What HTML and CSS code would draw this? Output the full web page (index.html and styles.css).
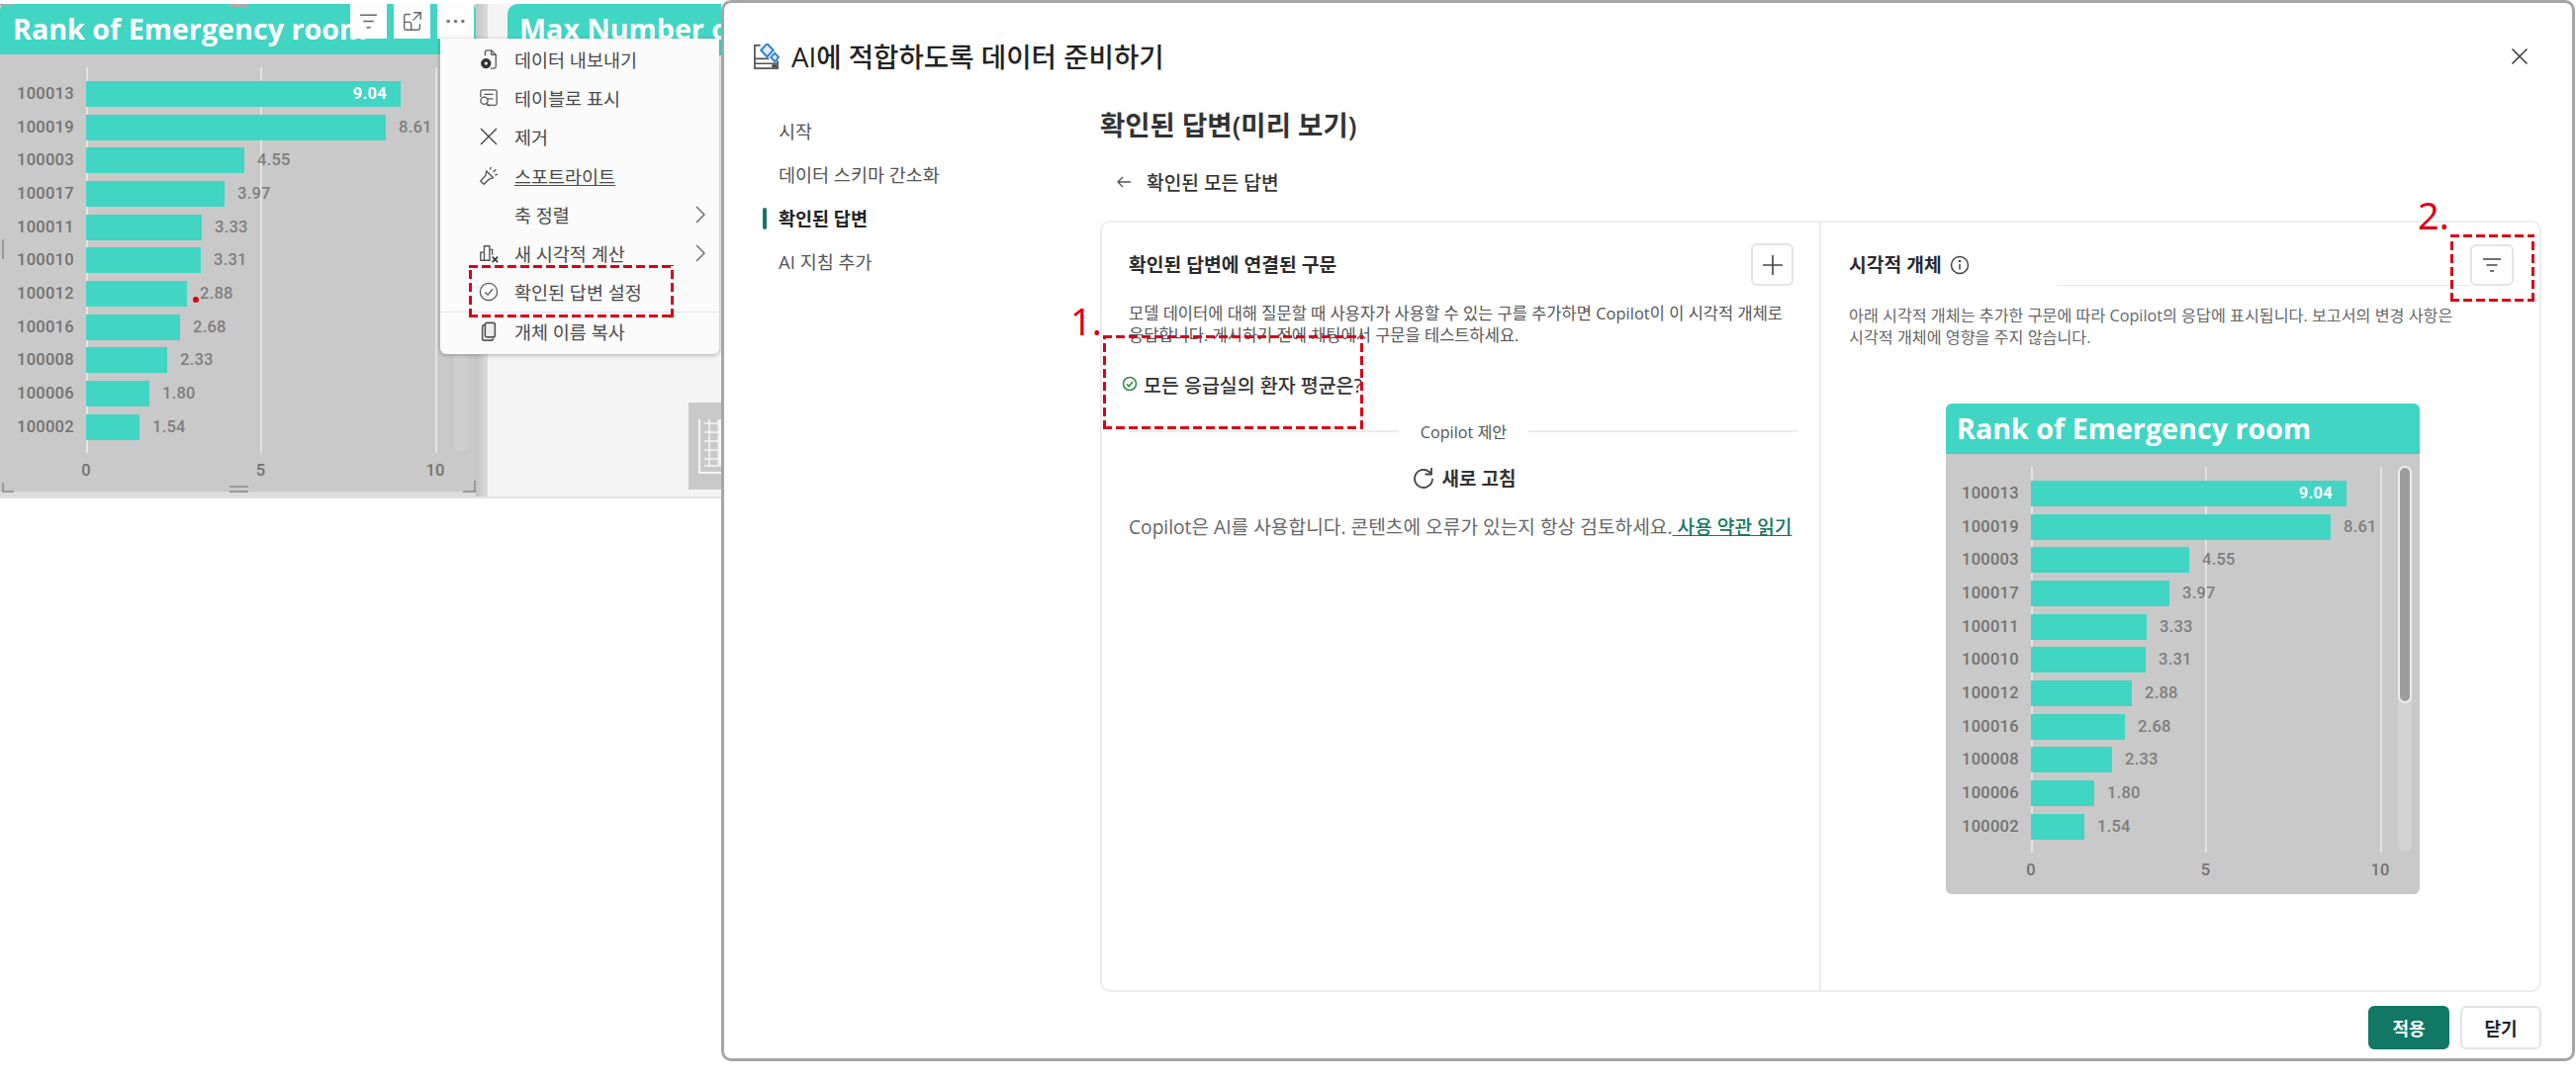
FILE: index.html
```html
<!DOCTYPE html>
<html lang="ko">
<head>
<meta charset="utf-8">
<title>AI에 적합하도록 데이터 준비하기</title>
<link rel="stylesheet" href="styles.css">
</head>
<body>
<div class="page">
  <section class="report">
    <div class="chart chart-left">
      <div class="chart-title">Rank of Emergency room</div>
      <div class="chart-body">
        <div class="plot">
          <div class="row"><span class="cat">100013</span><span class="bar" style="width:318px"><b class="inside">9.04</b></span></div>
          <div class="row"><span class="cat">100019</span><span class="bar" style="width:303px"></span><span class="val">8.61</span></div>
          <div class="row"><span class="cat">100003</span><span class="bar" style="width:160px"></span><span class="val">4.55</span></div>
          <div class="row"><span class="cat">100017</span><span class="bar" style="width:140px"></span><span class="val">3.97</span></div>
          <div class="row"><span class="cat">100011</span><span class="bar" style="width:117px"></span><span class="val">3.33</span></div>
          <div class="row"><span class="cat">100010</span><span class="bar" style="width:116px"></span><span class="val">3.31</span></div>
          <div class="row"><span class="cat">100012</span><span class="bar" style="width:102px"></span><span class="val">2.88</span></div>
          <div class="row"><span class="cat">100016</span><span class="bar" style="width:95px"></span><span class="val">2.68</span></div>
          <div class="row"><span class="cat">100008</span><span class="bar" style="width:82px"></span><span class="val">2.33</span></div>
          <div class="row"><span class="cat">100006</span><span class="bar" style="width:64px"></span><span class="val">1.80</span></div>
          <div class="row"><span class="cat">100002</span><span class="bar" style="width:54px"></span><span class="val">1.54</span></div>
        </div>
        <div class="axis"><span>0</span><span>5</span><span>10</span></div>
        <div class="scroll scroll-faint"></div>
        <i class="red-dot"></i>
      </div>
      <i class="grip grip-tl"></i><i class="grip grip-tm"></i><i class="grip grip-ml"></i>
      <i class="grip grip-bl"></i><i class="grip grip-bm"></i><i class="grip grip-br"></i>
    </div>
    <div class="shade"></div>
    <div class="second">
      <div class="second-title">Max Number of</div>
      <div class="tile">
        <svg class="tile-icon" viewBox="0 0 41 55" fill="none" stroke="#f4f4f4" stroke-width="1.600"><path d="M1 0v54h40" stroke-width="2"/><path d="M6 4h35M6 13h35M6 22h35M6 31h35M6 40h35M6 47h35M11 0v48M33 0v48"/><path d="M23 0v46" stroke-width="7"/></svg>
      </div>
    </div>

    <div class="toolbar">
      <span class="tool"><svg viewBox="0 0 20 20" fill="none" stroke="#666" stroke-width="1.400"><path d="M2 4h16M5 10h10M8 16h4"/></svg></span>
      <span class="tool"><svg viewBox="0 0 24 24" fill="none" stroke="#666" stroke-width="1.600"><path d="M10 4H5a2 2 0 0 0-2 2v14a2 2 0 0 0 2 2h14a2 2 0 0 0 2-2v-5M3 13h6a2 2 0 0 1 2 2v7M14 2h8v8M22 2l-9 9"/></svg></span>
      <span class="tool"><svg viewBox="0 0 20 20" fill="#777"><circle cx="3" cy="10" r="1.700"/><circle cx="10" cy="10" r="1.700"/><circle cx="17" cy="10" r="1.700"/></svg></span>
    </div>

    <ul class="menu">
      <li class="menu-item"><svg class="menu-icon" viewBox="0 0 20 22" fill="none" stroke="#555" stroke-width="1.400"><path d="M6 7V3a2 2 0 0 1 2-2h5l5 5v13a2 2 0 0 1-2 2h-4"/><path d="M13 1v5h5"/><circle cx="7" cy="15.500" r="5" fill="#333" stroke="#333"/><circle cx="7" cy="15.500" r="1.800" fill="#fff" stroke="none"/></svg><span>데이터 내보내기</span></li>
      <li class="menu-item"><svg class="menu-icon" viewBox="0 0 22 22" fill="none" stroke="#555" stroke-width="1.400"><path d="M9 19h9a2 2 0 0 0 2-2V4a2 2 0 0 0-2-2H4a2 2 0 0 0-2 2v6"/><path d="M6 7h10M16 12H9"/><circle cx="6" cy="14" r="4"/><path d="M9 17l3 3"/></svg><span>테이블로 표시</span></li>
      <li class="menu-item"><svg class="menu-icon" viewBox="0 0 20 20" fill="none" stroke="#444" stroke-width="1.400"><path d="M2 2l16 16M18 2 2 18"/></svg><span>제거</span></li>
      <li class="menu-item"><svg class="menu-icon" viewBox="0 0 22 22" fill="none" stroke="#555" stroke-width="1.500"><path d="M2 16.500 5.500 20l6-5.500 4.500-1.500L8.500 5.500l-1 5z"/><path d="M12.500 4l1-3M16 6.500l3-3M18 10l3-1"/></svg><span class="under">스포트라이트</span></li>
      <li class="menu-item"><span class="menu-blank"></span><span class="grow">축 정렬</span><svg class="chev" viewBox="0 0 12 20" fill="none" stroke="#666" stroke-width="1.400"><path d="M2 2l8 8-8 8"/></svg></li>
      <li class="menu-item"><svg class="menu-icon" viewBox="0 0 22 22" fill="none" stroke="#555" stroke-width="1.500"><path d="M2 19V10h4v9zM6 19V3h6v16M6 19h7M12 7h3v6"/><path d="M15 15l6 6M21 15l-6 6" stroke="#333" stroke-width="1.800"/></svg><span class="grow">새 시각적 계산</span><svg class="chev" viewBox="0 0 12 20" fill="none" stroke="#666" stroke-width="1.400"><path d="M2 2l8 8-8 8"/></svg></li>
      <li class="menu-item"><svg class="menu-icon" viewBox="0 0 22 22" fill="none" stroke="#555" stroke-width="1.400"><circle cx="11" cy="11" r="9.500"/><path d="M7 11.500l3 3 5.500-6.500"/></svg><span>확인된 답변 설정</span></li>
      <li class="menu-item menu-sep"><svg class="menu-icon" viewBox="0 0 20 22" fill="none" stroke="#555" stroke-width="1.800"><rect x="6" y="1.500" width="11" height="16" rx="2" fill="#eee"/><path d="M6 4H5a2 2 0 0 0-2 2v13a2 2 0 0 0 2 2h8a2 2 0 0 0 2-2"/></svg><span>개체 이름 복사</span></li>
    </ul>
  </section>

  <section class="dialog">
    <header class="dlg-head">
      <svg class="dlg-icon" viewBox="0 0 28 28" fill="none"><path d="M8 2H2v24h24v-8" stroke="#555" stroke-width="1.800"/><path d="M2 16h15M2 21h24" stroke="#555" stroke-width="1.800"/><path d="M20 22h5v3h-5z" fill="#444"/><path d="M15 0l6.500 7L15 14 8.500 7z" fill="#dcecfa" stroke="#2f7fd0" stroke-width="2"/><path d="M23 10l4 4.500-4 4.500-4-4.500z" fill="#dcecfa" stroke="#2f7fd0" stroke-width="2"/></svg>
      <h1 class="dlg-title">AI에 적합하도록 데이터 준비하기</h1>
      <svg class="dlg-close" viewBox="0 0 18 18" fill="none" stroke="#444" stroke-width="1.600"><path d="M1.500 1.500l15 15M16.500 1.500l-15 15"/></svg>
    </header>
    <div class="dlg-body">
      <nav class="nav">
        <a class="nav-item">시작</a>
        <a class="nav-item">데이터 스키마 간소화</a>
        <a class="nav-item nav-active">확인된 답변</a>
        <a class="nav-item">AI 지침 추가</a>
      </nav>
      <main class="main">
        <h2 class="main-title">확인된 답변(미리 보기)</h2>
        <div class="back">
          <svg class="back-icon" viewBox="0 0 16 14" fill="none" stroke="#555" stroke-width="1.300"><path d="M15 7H2M7 2 2 7l5 5"/></svg>
          <span>확인된 모든 답변</span>
        </div>
        <div class="card">
          <div class="pane pane-left">
            <div class="pane-head pane-head-left">
              <h3 class="pane-title">확인된 답변에 연결된 구문</h3>
              <span class="sq-btn sq-plus"><svg viewBox="0 0 22 22" fill="none" stroke="#444" stroke-width="1.600"><path d="M11 1v20M1 11h20"/></svg></span>
            </div>
            <p class="desc">모델 데이터에 대해 질문할 때 사용자가 사용할 수 있는 구를 추가하면 Copilot이 이 시각적 개체로 응답합니다. 게시하기 전에 채팅에서 구문을 테스트하세요.</p>
            <div class="question">
              <svg class="q-icon" viewBox="0 0 16 16" fill="none" stroke="#2f8a4a" stroke-width="1.600"><circle cx="8" cy="8" r="6.500"/><path d="M5 8.300l2.200 2.200L11 6"/></svg>
              <span>모든 응급실의 환자 평균은?</span>
            </div>
            <div class="divider"><span>Copilot 제안</span></div>
            <div class="refresh">
              <svg class="refresh-icon" viewBox="0 0 24 24" fill="none" stroke="#444" stroke-width="1.800"><path d="M19.500 8A9 9 0 1 0 21 13"/><path d="M20 2v6.500h-6.500"/></svg>
              <span>새로 고침</span>
            </div>
            <p class="terms">Copilot은 AI를 사용합니다. 콘텐츠에 오류가 있는지 항상 검토하세요.<a class="terms-link"> 사용 약관 읽기</a></p>
          </div>
          <div class="pane pane-right">
            <div class="pane-head">
              <h3 class="pane-title">시각적 개체</h3>
              <svg class="info" viewBox="0 0 20 20" fill="none" stroke="#444" stroke-width="1.500"><circle cx="10" cy="10" r="8.500"/><path d="M10 9v5.500"/><circle cx="10" cy="6" r=".6"/></svg>
              <span class="rule"></span>
              <span class="sq-btn sq-filter"><svg viewBox="0 0 20 20" fill="none" stroke="#444" stroke-width="1.600"><path d="M1 4h18M4.500 10h11M8 16h4"/></svg></span>
            </div>
            <p class="desc desc-right">아래 시각적 개체는 추가한 구문에 따라 Copilot의 응답에 표시됩니다. 보고서의 변경 사항은 시각적 개체에 영향을 주지 않습니다.</p>
            <div class="chart chart-right">
              <div class="chart-title">Rank of Emergency room</div>
              <div class="chart-body">
                <div class="plot">
                  <div class="row"><span class="cat">100013</span><span class="bar" style="width:319px"><b class="inside">9.04</b></span></div>
                  <div class="row"><span class="cat">100019</span><span class="bar" style="width:303px"></span><span class="val">8.61</span></div>
                  <div class="row"><span class="cat">100003</span><span class="bar" style="width:160px"></span><span class="val">4.55</span></div>
                  <div class="row"><span class="cat">100017</span><span class="bar" style="width:140px"></span><span class="val">3.97</span></div>
                  <div class="row"><span class="cat">100011</span><span class="bar" style="width:117px"></span><span class="val">3.33</span></div>
                  <div class="row"><span class="cat">100010</span><span class="bar" style="width:116px"></span><span class="val">3.31</span></div>
                  <div class="row"><span class="cat">100012</span><span class="bar" style="width:102px"></span><span class="val">2.88</span></div>
                  <div class="row"><span class="cat">100016</span><span class="bar" style="width:95px"></span><span class="val">2.68</span></div>
                  <div class="row"><span class="cat">100008</span><span class="bar" style="width:82px"></span><span class="val">2.33</span></div>
                  <div class="row"><span class="cat">100006</span><span class="bar" style="width:64px"></span><span class="val">1.80</span></div>
                  <div class="row"><span class="cat">100002</span><span class="bar" style="width:54px"></span><span class="val">1.54</span></div>
                </div>
                <div class="axis"><span>0</span><span>5</span><span>10</span></div>
                <div class="scroll"><i class="thumb"></i></div>
              </div>
            </div>
          </div>
        </div>
        <footer class="dlg-foot">
          <button class="btn btn-primary">적용</button>
          <button class="btn">닫기</button>
        </footer>
      </main>
    </div>
  </section>

  <i class="mark mark-menu"></i>
  <i class="mark mark-question"></i>
  <i class="mark mark-filter"></i>
  <span class="note note-1">1.</span>
  <span class="note note-2">2.</span>
</div>
</body>
</html>
```

FILE: styles.css
```css
* { box-sizing: border-box; }
html, body { margin: 0; padding: 0; background: #fff; }
body { font-family: "Open Sans", "Noto Sans CJK KR", sans-serif; color: #222; }
h1, h2, h3, p, ul { margin: 0; padding: 0; }
i { display: block; }

.page { position: relative; width: 2604px; height: 1096px; display: flex; align-items: flex-start; overflow: hidden; }

/* left report screenshot */
.report { position: relative; flex: 0 0 729px; height: 504px; padding-top: 4px; display: flex; align-items: flex-start; background: linear-gradient(#fff 4px, #f4f4f4 4px); border-bottom: 2px solid #e2e2e2; overflow: hidden; }
.shade { flex: 0 0 12px; height: 498px; background: linear-gradient(90deg, #c4c4c4, #dcdcdc); }

.chart { position: relative; flex: none; }
.chart-left { width: 481px; padding-bottom: 6px; background: #dcdcdc; }
.chart-right { width: 479px; margin: 56px 0 0 98px; }
.chart-title { height: 51px; padding-left: 11px; background: #41d5c4; color: #fff; font: 700 28.700px/50px "Open Sans", sans-serif; white-space: nowrap; overflow: hidden; border-radius: 6px 6px 0 0; }
.chart-left .chart-title { padding-left: 13px; }
.chart-body { position: relative; height: 442px; padding: 13px 0 0 17px; background: #c9c9c9; }
.chart-right .chart-body { height: 445px; padding-left: 16px; border-radius: 0 0 6px 6px; }
.plot { width: 425px; height: 390px; padding-top: 14px; display: flex; flex-direction: column; gap: 7.670px; background-image: linear-gradient(#e4e4e4, #e4e4e4), linear-gradient(#e4e4e4, #e4e4e4), linear-gradient(#e4e4e4, #e4e4e4); background-size: 2px 100%; background-repeat: no-repeat; background-position: 70px 0, 246px 0, 423px 0; }
.row { display: flex; align-items: center; height: 26px; font: 500 16.500px/26px Roboto, sans-serif; letter-spacing: .25px; color: #727272; }
.cat { flex: 0 0 70px; }
.bar { display: flex; justify-content: flex-end; height: 26px; background: #41d5c4; }
.inside { padding-right: 14px; color: #fff; font-weight: 700; }
.val { margin-left: 13px; color: #7e7e7e; }
.axis { display: flex; justify-content: space-between; width: 393px; margin: 8px 0 0 50px; font: 500 16.500px/20px Roboto, sans-serif; color: #727272; }
.axis span { width: 40px; text-align: center; }
.scroll { position: absolute; right: 8px; top: 12px; width: 14px; height: 390px; border-radius: 7px; background: #d2d2d2; }
.scroll-faint { background: #cfcfcf; }
.thumb { width: 14px; height: 240px; border-radius: 7px; background: #9d9d9d; border: 2px solid #eee; }
.red-dot { position: absolute; left: 195px; top: 245px; width: 6px; height: 6px; border-radius: 50%; background: #d9001b; }

.grip { position: absolute; background: #9a9a9a; }
.grip-tl { left: 0; top: 0; width: 14px; height: 2px; background: #aaa; }
.grip-tm { left: 232px; top: 0; width: 18px; height: 3px; background: #aaa; }
.grip-ml { left: 2px; top: 238px; width: 2px; height: 20px; }
.grip-bl { left: 2px; top: 484px; width: 12px; height: 10px; background: none; border-left: 2px solid #999; border-bottom: 2px solid #999; }
.grip-bm { left: 232px; top: 487px; width: 19px; height: 7px; background: none; border-top: 2px solid #999; border-bottom: 2px solid #999; }
.grip-br { left: 468px; top: 482px; width: 13px; height: 12px; background: none; border-right: 2px solid #999; border-bottom: 2px solid #999; }

.second { flex: 0 0 216px; margin-left: 20px; }
.second-title { height: 52px; padding-left: 12px; border-radius: 10px 0 0 0; background: #41d5c4; color: #fff; font: 700 28.700px/50px "Open Sans", sans-serif; white-space: nowrap; overflow: hidden; }
.tile { display: flex; align-items: center; padding-left: 10px; width: 52px; height: 88px; margin: 351px 0 0 auto; background: #c9c9c9; overflow: hidden; }
.tile-icon { flex: none; width: 41px; height: 55px; }

.toolbar { position: absolute; left: 354px; top: 4px; display: flex; gap: 7px; }
.tool { display: flex; align-items: center; justify-content: center; width: 37px; height: 35px; background: #fdfdfd; }
.tool svg { width: 21px; height: 21px; }

.menu { position: absolute; left: 445px; top: 39px; width: 282px; height: 319px; padding-top: 1px; list-style: none; background: #fafbfa; border-radius: 0 0 6px 6px; box-shadow: 0 1px 4px rgba(0,0,0,.3); }
.menu-item { display: flex; align-items: center; height: 39.300px; padding: 0 13px 0 39px; font-size: 18.500px; color: #4a4a4a; }
.menu-sep { border-top: 1px solid #e6e6e6; }
.menu-icon { flex: none; width: 20px; height: 20px; margin-right: 16px; }
.menu-blank { flex: none; width: 36px; }
.under { text-decoration: underline; text-decoration-thickness: 1px; }
.grow { flex: 1; }
.chev { flex: none; width: 12px; height: 20px; }

/* dialog */
.dialog { flex: 0 0 1874px; height: 1073px; display: flex; flex-direction: column; background: #fff; border: 3px solid #a6a6a6; border-radius: 10px; }
.dlg-head { display: flex; align-items: center; height: 97px; padding: 11px 44px 0 29px; }
.dlg-icon { flex: none; width: 27px; height: 27px; margin-right: 12px; }
.dlg-title { flex: 1; font-size: 27.600px; font-weight: 500; line-height: 40px; color: #222; }
.dlg-close { flex: none; width: 18px; height: 18px; }
.dlg-body { flex: 1; display: flex; min-height: 0; }
.nav { flex: 0 0 380px; padding-top: 11px; display: flex; flex-direction: column; }
.nav-item { position: relative; height: 44px; padding-left: 55px; font-size: 18.500px; line-height: 44px; color: #555; }
.nav-active { color: #222; font-weight: 600; }
.nav-active::before { content: ""; position: absolute; left: 39px; top: 11px; width: 4px; height: 22px; background: #117865; border-radius: 2px; }
.main { flex: 1; display: flex; flex-direction: column; padding-right: 31px; min-width: 0; }
.main-title { font-size: 27.500px; font-weight: 600; line-height: 54px; color: #333; }
.back { display: flex; align-items: center; height: 60px; margin-bottom: 9px; padding-left: 16px; font-size: 19.200px; font-weight: 500; color: #333; }
.back-icon { width: 16px; height: 14px; margin-right: 15px; }
.card { flex: 1; display: flex; min-height: 0; border: 2px solid #ececec; border-radius: 10px; }
.pane-left { flex: 0 0 727px; padding: 21px 21px 0 27px; border-right: 2px solid #ececec; }
.pane-right { flex: 1; padding: 22px 26px 0 28px; }
.pane-head { display: flex; align-items: center; }
.pane-head-left { justify-content: space-between; padding-right: 5px; }
.pane-title { font-size: 19.300px; font-weight: 700; line-height: 28px; color: #2b2b2b; }
.sq-btn { display: flex; align-items: center; justify-content: center; border: 2px solid #e4e4e4; border-radius: 6px; background: #fff; }
.sq-plus { width: 43px; height: 43px; }
.sq-plus svg { width: 22px; height: 22px; }
.sq-filter { width: 44px; height: 42px; }
.sq-filter svg { width: 20px; height: 20px; }
.info { width: 20px; height: 20px; margin-left: 8px; }
.rule { flex: 1; align-self: flex-end; height: 1px; margin-left: 88px; background: #e6e6e6; }
.desc { margin-top: 17px; font-size: 16.500px; line-height: 22px; color: #555; }
.desc-right { width: 625px; margin-top: 19px; font-size: 16.200px; color: #666; }
.question { display: flex; align-items: center; height: 28px; margin: 24px 0 0 -7px; font-size: 19.500px; font-weight: 500; color: #333; }
.q-icon { width: 16px; height: 16px; margin-right: 6px; }
.divider { display: flex; align-items: center; gap: 22px; height: 22px; margin-top: 23px; font-size: 16.200px; color: #555; }
.divider::before, .divider::after { content: ""; flex: 1; height: 2px; background: #ececec; }
.refresh { display: flex; align-items: center; justify-content: center; gap: 7px; height: 30px; margin-top: 21px; font-size: 19px; font-weight: 700; color: #333; }
.refresh-icon { width: 24px; height: 24px; }
.terms { margin-top: 21px; font-size: 19.200px; line-height: 28px; color: #666; white-space: nowrap; }
.terms-link { color: #117865; font-weight: 500; text-decoration: underline; }
.dlg-foot { display: flex; justify-content: flex-end; gap: 11px; height: 67px; padding-top: 14px; }
.btn { width: 82px; height: 44px; border: 2px solid #e4e4e4; border-radius: 6px; background: #fff; font: 600 18px "Noto Sans CJK KR", sans-serif; color: #222; }
.btn-primary { border-color: #117865; background: #117865; color: #fff; }

/* annotations laid over the screenshot */
.mark { position: absolute; background-image: repeating-linear-gradient(90deg, #d9001b 0 9px, transparent 9px 13px), repeating-linear-gradient(90deg, #d9001b 0 9px, transparent 9px 13px), repeating-linear-gradient(0deg, #d9001b 0 9px, transparent 9px 13px), repeating-linear-gradient(0deg, #d9001b 0 9px, transparent 9px 13px); background-size: 100% 3px, 100% 3px, 3px 100%, 3px 100%; background-position: 0 0, 0 100%, 0 0, 100% 0; background-repeat: no-repeat; }
.mark-menu { left: 474px; top: 268px; width: 207px; height: 53px; }
.mark-question { left: 1115px; top: 339px; width: 263px; height: 95px; }
.mark-filter { left: 2477px; top: 237px; width: 85px; height: 68px; }
.note { position: absolute; font: 400 38px/40px "Noto Sans", sans-serif; color: #d9001b; }
.note-1 { left: 1082px; top: 304px; }
.note-2 { left: 2444px; top: 197px; }
```
